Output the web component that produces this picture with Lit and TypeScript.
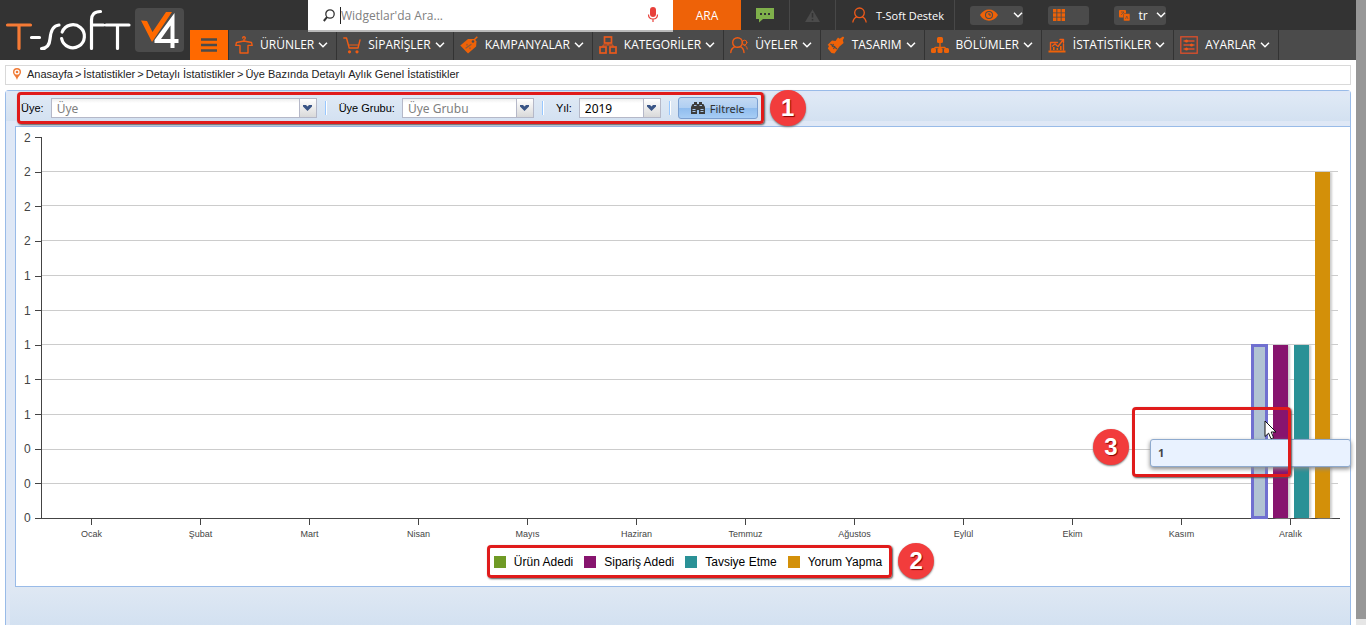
import { LitElement, html, css, svg } from "lit";
import { customElement } from "lit/decorators.js";

const MONTHS = ["Ocak", "Şubat", "Mart", "Nisan", "Mayıs", "Haziran", "Temmuz", "Ağustos", "Eylül", "Ekim", "Kasım", "Aralık"];
const TICKS = [2, 2, 2, 2, 1, 1, 1, 1, 1, 0, 0, 0];
const MAX = 2.2;
const SERIES = [
  { name: "Ürün Adedi", color: "green", value: 1 },
  { name: "Sipariş Adedi", color: "purple", value: 1 },
  { name: "Tavsiye Etme", color: "teal", value: 1 },
  { name: "Yorum Yapma", color: "amber", value: 2 },
];

const line = (body: unknown) => svg`<g fill="none" stroke="#f05c14" stroke-width="1.4" stroke-linecap="round" stroke-linejoin="round">${body}</g>`;

const ICONS: Record<string, unknown> = {
  shirt: line(svg`<path d="M9 5V3.400a1.300 1.300 0 1 0-1.300-1.300M9 5 1.500 6.500.8 9.400h4.200V17h8V9.400h4.200l-.7-2.900z"/>`),
  cart: svg`${line(svg`<path d="M.8 2h2.700l2.700 10h8.800l2-8"/>`)}<path d="M6 9h9.500" stroke="#f05c14"/><g fill="#f05c14"><circle cx="6.500" cy="15.800" r="1.600"/><circle cx="14" cy="15.800" r="1.600"/></g>`,
  tag: svg`<path d="M8 3h6.500l2 2.500-.4 5L8 17.500.3 9.500z" fill="#ee6208"/><path d="m13 5 4.300-4.300" stroke="#ee6208" stroke-width="1.500"/><circle cx="13" cy="5.500" r="1.300" fill="#4b4b4b"/><path d="m6 12 5-3.500M7 8.500v.6M10 12v.6" stroke="#8a5a3a" stroke-width="1.300" stroke-linecap="round"/>`,
  boxes: svg`<g fill="none" stroke="#e8591d" stroke-width="1.700"><rect x="5.500" y="1" width="7" height="6"/><rect x="1" y="11" width="6" height="6"/><rect x="11" y="11" width="6" height="6"/><path d="M9 7v2M4 11V9h10v2" stroke-width="1"/></g>`,
  members: line(svg`<circle cx="7.500" cy="6.500" r="4.800"/><path d="M.8 16.500c.2-3 2-4.800 4-5.800M14 16.500c-.2-3-1.600-4.800-3.700-5.800"/><g stroke-width="1"><circle cx="14.600" cy="6.500" r="2.300"/><path d="M14 9.300c2 0 3 1.500 3.200 3.700"/></g>`),
  brush: svg`<path d="m5 4.500 3.500.5L11 1.500l1.700 1.200L16 .5l1.200 1-1.400 2.700.8 2.800-4.100 3.500-5 7-3-.5L.8 12.500 2 10 .5 9z" fill="#ee6208"/><path d="m3.500 8 6.500 5M6.500 8l-1.300 3M8 10l-1.500 3" stroke="#4b4b4b" stroke-width="1.100"/>`,
  tree: svg`<g fill="#ee6208"><rect x="6" y="1" width="6" height="6" rx="1.500"/><rect x="0" y="12" width="5" height="5" rx="1.500"/><rect x="6.500" y="12" width="5" height="5" rx="1.500"/><rect x="13" y="12" width="5" height="5" rx="1.500"/></g><path d="M9 6v8M2.500 13l2-1.500h9l2 1.500" fill="none" stroke="#ee6208" stroke-width="1.400"/>`,
  stats: svg`${line(svg`<path d="M2.500 14V6.500h7M15.500 8v6M4.500 10l2.500-2 3 2.500 5-6.500M12 3.500h3.500v3"/>`)}<path d="M.5 14.500h17V16.500H.5zM5 11h1.600v3H5zM8.500 12h1.600v2H8.500zM12 10h1.600v4H12z" fill="#ee6208"/>`,
  sliders: svg`<g fill="none" stroke="#dd4f2b" stroke-width="1.300"><rect x=".8" y=".8" width="16.400" height="16.400"/><path d="M3.500 5h11M3.500 9h11M3.500 13h11"/></g><g fill="#ee5a1a"><circle cx="6.500" cy="5" r="1.500"/><circle cx="11.500" cy="9" r="1.500"/><circle cx="6.500" cy="13" r="1.500"/></g>`,
};

const NAV = [
  ["shirt", "ÜRÜNLER"],
  ["cart", "SİPARİŞLER"],
  ["tag", "KAMPANYALAR"],
  ["boxes", "KATEGORİLER"],
  ["members", "ÜYELER"],
  ["brush", "TASARIM"],
  ["tree", "BÖLÜMLER"],
  ["stats", "İSTATİSTİKLER"],
  ["sliders", "AYARLAR"],
];

const chevron = html`<svg class="chevron" width="10" height="6" viewBox="0 0 10 6"><path d="m1 .8 4 4 4-4" fill="none" stroke="#fff" stroke-width="1.500"/></svg>`;

@customElement("site-header")
class SiteHeader extends LitElement {
  static styles = css`
    :host { display: block; font-family: "Open Sans", sans-serif; font-size: 12px; color: #fff; }
    .header { display: grid; grid-template-columns: 190px 1fr; height: 60px; background: #333; }
    .logo { display: block; }
    .rows { display: grid; grid-template-rows: 30px 30px; min-width: 0; }
    .top { display: flex; padding-left: 118px; }
    .search { display: flex; align-items: center; width: 365px; height: 32px; box-sizing: border-box; background: #fff; border-bottom: 2px solid #bababa; z-index: 1; position: relative; padding: 0 13px 0 15px; }
    .query { flex: 1; min-width: 0; height: 17px; margin-left: 5px; border: 0; border-left: 1px solid #222; outline: 0; padding: 0; background: none; font: 12px/17px "Open Sans", sans-serif; }
    .query::placeholder { color: #808080; opacity: 1; }
    .go, .tool, .menu { border: 0; padding: 0; color: #fff; font: 12px "Open Sans", sans-serif; display: flex; align-items: center; justify-content: center; }
    .go { width: 68px; background: #ee6208; }
    .tool { width: 48px; background: none; border-right: 1px solid #484848; box-sizing: content-box; }
    .tool.warn { width: 45px; }
    .tool.user { width: 108px; padding-right: 10px; gap: 9px; font-size: 11px; justify-content: flex-end; }
    .pills { display: flex; align-items: center; gap: 25px; padding-left: 15px; }
    .pill { display: flex; align-items: center; height: 19px; background: #4b4b4b; border: 0; border-radius: 3px; padding: 0; color: #fff; font: 12px "Open Sans", sans-serif; }
    .eye { width: 53px; padding: 0 0 0 10px; justify-content: space-between; box-sizing: border-box; }
    .apps { width: 41px; padding-left: 5px; }
    .lang { width: 52px; padding: 0 0 0 5px; box-sizing: border-box; justify-content: space-between; }
    .nav { display: flex; background: #4b4b4b; }
    .menu { width: 38px; background: #ff6900; }
    .item { display: flex; align-items: center; padding: 0 8px 0 6px; border-right: 1px solid #333; color: #fff; text-decoration: none; }
    .item:first-of-type { border-left: 1px solid #333; }
    .label { margin: 0 4px 0 7px; line-height: 30px; white-space: nowrap; }
  `;
  render() {
    return html`<header class="header">
      <svg class="logo" width="190" height="60" viewBox="0 0 190 60" role="img" aria-label="T-Soft V4">
        <rect x="135" y="8" width="49" height="44" rx="4" fill="#4b4b4b"/>
        <g fill="none" stroke-width="3.200" stroke-linecap="round" stroke-linejoin="round">
          <path d="M7.500 25h23M19 25.500v23" stroke="#f57a35"/>
          <path d="M31.500 37.500h8M41.500 48.500c5 0 8-3.500 8.500-9.500s2.500-13.500 9-14M91.500 48.500V20c0-5 2.500-8.500 9-8.500M91.500 25h12M106 25h23M117.500 25.500v23" stroke="#fff"/>
          <path d="M62.200 32a11.500 11.500 0 1 1-.6 6.500" stroke="#fff"/>
        </g>
        <path d="m141 20.500 6 .5 5.500 11 13.500-20h6l-20 30z" fill="#ff6900"/>
        <path d="M174.500 13v26h4v4h-4v5h-4v-5h-16v-3zM170.500 25.500 161 39h9.500z" fill="#fff" fill-rule="evenodd"/>
      </svg>
      <div class="rows">
        <div class="top">
          <form class="search" role="search">
            <svg width="12" height="13" viewBox="0 0 12 13" fill="none" stroke="#333"><circle cx="7" cy="5" r="4.200" stroke-width="1.300"/><path d="M4 8.200.8 12" stroke-width="2"/></svg>
            <input class="query" type="text" aria-label="Ara" placeholder="Widgetlar'da Ara...">
            <svg width="14" height="16" viewBox="0 0 14 16"><rect x="4" y="0" width="6" height="10" rx="3" fill="#e8403a"/><path d="M2.500 7.500c0 6 9 6 9 0M7 12v3" fill="none" stroke="#e8403a" stroke-width="1.200"/></svg>
          </form>
          <button class="go">ARA</button>
          <button class="tool" aria-label="Mesajlar"><svg width="18" height="16" viewBox="0 0 18 16"><path d="M0 1h18v11H7l-4 3.500V12H0z" fill="#7fb04b"/><path d="M4 6h2v2H4zM8 6h2v2H8zM12 6h2v2h-2z" fill="#333"/></svg></button>
          <button class="tool warn" aria-label="Uyarılar"><svg width="15" height="13" viewBox="0 0 15 13"><path d="M7.500.5 15 13H0z" fill="#4b4b4b"/><path d="M7.500 4v4.500M7.500 10v1.500" stroke="#333" stroke-width="1.500"/></svg></button>
          <button class="tool user"><svg width="15" height="16" viewBox="0 0 15 16" fill="none" stroke="#ee5a1a" stroke-width="1.300"><circle cx="7.500" cy="5.800" r="4.800"/><path d="M.8 15.500c.3-3 1.700-4.700 3.900-5.700M14.200 15.500c-.3-3-1.700-4.700-3.900-5.700"/></svg>T-Soft Destek</button>
          <div class="pills">
            <button class="pill eye" aria-label="Görünüm"><svg width="18" height="12" viewBox="0 0 18 12"><path d="M0 6C4-1.500 14-1.500 18 6 14 13.500 4 13.500 0 6z" fill="#ee6208"/><circle cx="9" cy="6" r="4" fill="#4b4b4b"/><circle cx="9" cy="6" r="3" fill="#ee6208"/><path d="M9 4v2h2" fill="none" stroke="#4b4b4b"/></svg>${chevron}</button>
            <button class="pill apps" aria-label="Uygulamalar"><svg width="12" height="12" viewBox="0 0 12 12" fill="#ee6208"><path d="M0 0h3.400v3.400H0zM4.300 0h3.400v3.400H4.300zM8.600 0H12v3.400H8.600zM0 4.300h3.400v3.400H0zM4.300 4.300h3.400v3.400H4.300zM8.600 4.300H12v3.400H8.600zM0 8.600h3.400V12H0zM4.300 8.600h3.400V12H4.300zM8.600 8.600H12V12H8.600z"/></svg></button>
            <button class="pill lang"><svg width="11" height="11" viewBox="0 0 11 11"><rect width="7" height="7.500" rx="1" fill="#ee6208"/><rect x="4.500" y="3.500" width="6.500" height="7.500" rx="1" fill="#ee6208" stroke="#4b4b4b" stroke-width=".5"/><path d="M2 2h3L2 5M6.500 9l1.300-3L9 9" fill="none" stroke="#4b4b4b" stroke-width=".6"/></svg>tr ${chevron}</button>
          </div>
        </div>
        <nav class="nav">
          <button class="menu" aria-label="Menü"><svg width="16" height="14" viewBox="0 0 16 14"><path d="M0 1.500h16M0 7h16M0 12.500h16" stroke="#4b4b4b" stroke-width="2.400"/></svg></button>
          ${NAV.map(([icon, label]) => html`<a class="item" href="#"><svg width="18" height="18" viewBox="0 0 18 18">${ICONS[icon]}</svg><span class="label">${label}</span>${chevron}</a>`)}
        </nav>
      </div>
    </header>`;
  }
}

@customElement("filter-bar")
class FilterBar extends LitElement {
  static styles = css`
    :host { display: block; font-family: "Liberation Sans", Arial, sans-serif; font-size: 11px; color: #000; }
    .bar { display: flex; height: 34px; padding: 0 0 1px 11px; align-items: center; }
    .filters { position: relative; display: flex; align-items: center; height: 32px; padding: 0 6px 0 4px; box-sizing: border-box; }
    .callout { position: absolute; inset: 0; border: 3px solid #e01b1b; border-radius: 4px; box-shadow: 1px 1px 2px #555; pointer-events: none; }
    .caption { margin-right: 7px; white-space: nowrap; }
    .combo { display: flex; height: 20px; box-sizing: border-box; border: 1px solid #b5b8c8; background: linear-gradient(#eee, #fff 4px); }
    .pick { flex: 1; min-width: 0; appearance: none; border: 0; outline: 0; background: none; padding: 0 5px; color: #808080; font: 12px "Noto Sans", sans-serif; }
    .year { color: #000; }
    .arrow { width: 17px; box-sizing: border-box; display: grid; place-items: center; border-left: 1px solid #b5b8c8; background: linear-gradient(#fff, #d9d9d9); }
    .member { width: 266px; }
    .group { width: 132px; }
    .years { width: 82px; }
    .rule { width: 2px; height: 14px; margin: 0 12px 0 8px; background: linear-gradient(90deg, #98c8ff 50%, #fff 50%); }
    .last { margin-right: 7px; }
    .filter { display: flex; align-items: center; justify-content: center; gap: 5px; width: 80px; height: 22px; padding: 0; border: 1px solid #7b9fd0; border-radius: 3px; background: linear-gradient(#c3d9f3, #b0cff2 48%, #8fbcee 50%, #a7cdf5); color: #333; font: 11px "Noto Sans", sans-serif; }
    .badge { display: grid; place-items: center; width: 36px; height: 36px; margin-left: 6px; border-radius: 50%; background: #f23c3c; color: #fff; font: bold 24px "Liberation Sans", Arial, sans-serif; text-shadow: 1px 1px 1px #800; box-shadow: 0 1px 2px #777; z-index: 1; }
  `;
  render() {
    const arrow = html`<span class="arrow"><svg width="9" height="6" viewBox="0 0 9 6"><path d="M0 0h3l1.500 1.500L6 0h3v1.500L4.500 6 0 1.500z" fill="#3a5586"/></svg></span>`;
    return html`<div class="bar">
      <form class="filters">
        <label class="caption" for="member">Üye:</label>
        <div class="combo member"><select class="pick" id="member"><option>Üye</option></select>${arrow}</div>
        <span class="rule"></span>
        <label class="caption" for="group">Üye Grubu:</label>
        <div class="combo group"><select class="pick" id="group"><option>Üye Grubu</option></select>${arrow}</div>
        <span class="rule"></span>
        <label class="caption" for="year">Yıl:</label>
        <div class="combo years"><select class="pick year" id="year"><option>2019</option></select>${arrow}</div>
        <span class="rule last"></span>
        <button class="filter" type="button"><svg width="14" height="12" viewBox="0 0 14 12"><path d="M3 0h3v2h2V0h3v2h1.500L14 5v7H8V8H6v4H0V5l1.500-3H3z" fill="#3c3c3c"/><path d="M1.500 7.500h3M9.500 7.500h3M1.500 9.500h3M9.500 9.500h3M3 3.500h2.500M8.500 3.500H11" stroke="#a9c6ea"/></svg>Filtrele</button>
        <span class="callout"></span>
      </form>
      <span class="badge">1</span>
    </div>`;
  }
}

@customElement("stats-chart")
class StatsChart extends LitElement {
  static styles = css`
    :host { display: block; font-family: "Liberation Sans", Arial, sans-serif; color: #444; }
    .chart { padding: 10px 10px 0 8px; }
    .plot { position: relative; display: grid; grid-template-columns: 17px 1fr; height: 382px; }
    .axis { display: flex; flex-direction: column; justify-content: space-between; }
    .tick { display: flex; align-items: center; justify-content: space-between; height: 1px; font: 12px/14px "Liberation Sans", Arial, sans-serif; }
    .tick::after { content: ""; width: 6px; height: 1px; background: #444; }
    .area { display: grid; border-left: 1px solid #444; border-bottom: 1px solid #444; }
    .lines, .groups { grid-area: 1 / 1; }
    .lines { display: flex; flex-direction: column; padding-right: 2px; }
    .band { flex: 1; border-bottom: 1px solid #ccc; }
    .band:last-child { border-bottom: 0; }
    .groups, .months { display: flex; justify-content: space-between; padding: 0 49px; }
    .slot { width: 1px; display: flex; justify-content: center; align-items: flex-end; gap: 6px; }
    .bar { flex: none; width: 15px; box-shadow: 2px 0 2px #ccc; }
    .green { background: #6f9a25; }
    .purple { background: #87146e; }
    .teal { background: #2a9196; }
    .amber { background: #d39009; }
    .active { background: #b1c3d3; outline: 3px solid #7070d0; outline-offset: -2px; box-shadow: none; }
    .months { margin-left: 18px; }
    .month { width: 1px; display: flex; flex-direction: column; align-items: center; font-size: 9px; line-height: 12px; }
    .month::before { content: ""; width: 1px; height: 6px; margin-bottom: 3px; background: #444; }
    .tip { position: absolute; right: -11px; top: 302px; width: 201px; height: 28px; box-sizing: border-box; padding-left: 7px; border: 1px solid #8eaace; border-radius: 3px; background: #e9f2ff; box-shadow: 0 2px 4px #888; font: bold 11px/26px "Noto Sans", sans-serif; }
    .cursor { position: absolute; right: 63px; top: 283px; }
    .callout { position: absolute; border: 3px solid #e01b1b; border-radius: 4px; box-shadow: 1px 1px 2px #555; pointer-events: none; box-sizing: border-box; }
    .hover { right: 49px; top: 270px; width: 159px; height: 70px; }
    .badge { position: absolute; display: grid; place-items: center; width: 36px; height: 36px; border-radius: 50%; background: #f23c3c; color: #fff; font: bold 24px "Liberation Sans", Arial, sans-serif; text-shadow: 1px 1px 1px #800; box-shadow: 0 1px 2px #777; }
    .three { right: 211px; top: 292px; }
    .foot { display: flex; justify-content: center; padding: 5px 0 8px 15px; }
    .legend { position: relative; padding: 0 10px 0 7px; }
    .entries { display: flex; align-items: center; gap: 11px; height: 33px; padding: 0; margin: 0; list-style: none; color: #000; font-size: 12px; }
    .entry { display: flex; align-items: center; gap: 8px; white-space: nowrap; }
    .swatch { width: 12px; height: 12px; }
    .around { inset: 0; }
    .two { left: 100%; top: -2px; margin-left: 6px; }
  `;
  render() {
    return html`<div class="chart">
      <div class="plot">
        <div class="axis">${TICKS.map((t) => html`<div class="tick">${t}</div>`)}</div>
        <div class="area">
          <div class="lines">${TICKS.slice(1).map(() => html`<div class="band"></div>`)}</div>
          <div class="groups">
            ${MONTHS.map((_, i) => html`<div class="slot">
              ${i === 11 ? SERIES.map((s, n) => html`<div class="bar ${s.color} ${n === 0 ? "active" : ""}" style="height:${(s.value / MAX) * 100}%"></div>`) : ""}
            </div>`)}
          </div>
        </div>
        <div class="tip" role="tooltip">1</div>
        <span class="callout hover"></span>
        <span class="badge three">3</span>
        <svg class="cursor" width="13" height="20" viewBox="0 0 13 20"><path d="M1 1v15.500l3.600-3.300 2.400 5.600 2.600-1.100L7.200 12H12z" fill="#fff" stroke="#111"/></svg>
      </div>
      <div class="months">${MONTHS.map((m) => html`<div class="month">${m}</div>`)}</div>
      <div class="foot">
        <div class="legend">
          <ul class="entries">${SERIES.map((s) => html`<li class="entry"><span class="swatch ${s.color}"></span>${s.name}</li>`)}</ul>
          <span class="callout around"></span>
          <span class="badge two">2</span>
        </div>
      </div>
    </div>`;
  }
}

@customElement("app-root")
class AppRoot extends LitElement {
  static styles = css`
    :host { display: block; font-family: "Liberation Sans", Arial, sans-serif; }
    .page { display: grid; grid-template-columns: 1fr 10px; min-height: 100vh; background: #fff; }
    .main { display: flex; flex-direction: column; min-width: 0; }
    .scroll { background: #e6e6e6; padding-bottom: 6px; display: grid; }
    .thumb { background: #979797; }
    .crumbs { display: flex; align-items: center; gap: 2px; height: 20px; box-sizing: border-box; margin: 5px 5px; border: 1px solid #d9d9d9; padding: 0 0 2px 7px; font-size: 11px; color: #222; }
    .pin { margin-right: 4px; }
    .crumb { color: inherit; text-decoration: none; }
    .panel { flex: 1; margin: 0 5px; border: 1px solid #99bbe8; border-bottom: 0; border-radius: 4px 4px 0 0; background: #dfe8f6; display: flex; flex-direction: column; }
    .tools { background: linear-gradient(#dfe8f6 5px, #dfe9f5 5px, #d3e1f1 30px, #dfe8f6 30px); }
    .body { margin: 0 -1px 0 9px; border: 1px solid #99bbe8; background: #fff; }
    .rest { flex: 1; margin-left: 4px; background: linear-gradient(#dfe8f3, #d3e1f1); }
  `;
  render() {
    return html`<div class="page">
      <div class="main">
        <site-header></site-header>
        <nav class="crumbs"><svg class="pin" width="8" height="12" viewBox="0 0 8 12"><path d="M4 0a4 4 0 0 1 4 4c0 3-3 4-4 8C3 8 0 7 0 4a4 4 0 0 1 4-4z" fill="#f07a35"/><circle cx="4" cy="4" r="2.600" fill="#fff"/><circle cx="4" cy="4" r="1.300" fill="#f07a35"/></svg><a class="crumb" href="#">Anasayfa</a><span>&gt;</span><a class="crumb" href="#">İstatistikler</a><span>&gt;</span><a class="crumb" href="#">Detaylı İstatistikler</a><span>&gt;</span><a class="crumb" href="#">Üye Bazında Detaylı Aylık Genel İstatistikler</a></nav>
        <main class="panel">
          <filter-bar class="tools"></filter-bar>
          <stats-chart class="body"></stats-chart>
          <div class="rest"></div>
        </main>
      </div>
      <div class="scroll"><div class="thumb"></div></div>
    </div>`;
  }
}
